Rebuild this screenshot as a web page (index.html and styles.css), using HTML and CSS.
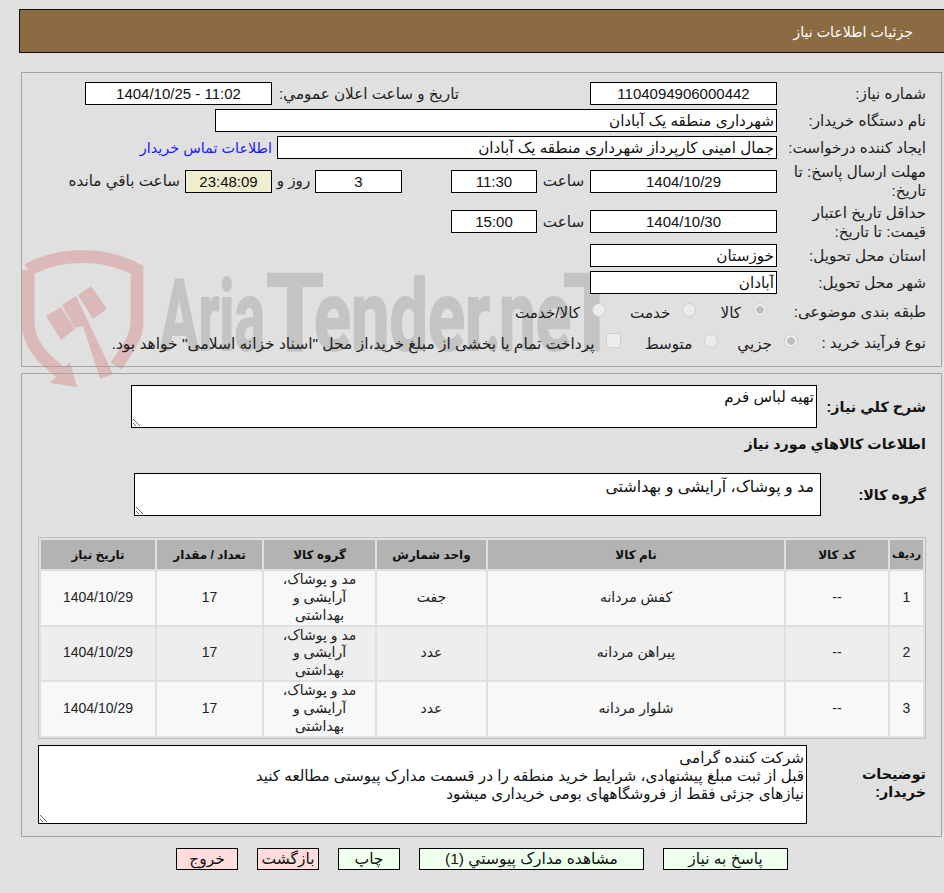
FILE: index.html
```html
<!DOCTYPE html>
<html lang="fa" dir="rtl">
<head>
    <meta charset="UTF-8">
    <title>جزئیات اطلاعات نیاز</title>
    <link rel="stylesheet" href="styles.css">
</head>
<body>
    <!-- Watermark -->
    <svg class="watermark" viewBox="0 240 640 160" width="640" height="160">
        <g class="wm-shield">
            <path class="wm-line" d="M28 270 C60 252 105 252 137 270 L137 322 C137 338 128 348 116 366"/>
            <path class="wm-line" d="M28 270 L28 322 C28 345 45 362 65 375"/>
            <polygon points="70,362 77,387 50,383"/>
            <polygon points="46,316 61,307 75,329 61,340"/>
            <polygon points="62,305 76,296 113,374 100,379 83,326 75,328"/>
            <polygon points="78,295 91,286 107,309 93,319"/>
        </g>
        <g class="wm-text">
            <text x="160" y="350" textLength="105" lengthAdjust="spacingAndGlyphs">Aria</text>
            <text class="wm-cap" x="266" y="350" textLength="58" lengthAdjust="spacingAndGlyphs">T</text>
            <text x="314" y="350" textLength="176" lengthAdjust="spacingAndGlyphs">ender</text>
            <text x="486" y="350" textLength="14" lengthAdjust="spacingAndGlyphs">.</text>
            <text x="499" y="350" textLength="72" lengthAdjust="spacingAndGlyphs">ne</text>
            <text class="wm-cap" x="563" y="350" textLength="58" lengthAdjust="spacingAndGlyphs">T</text>
        </g>
    </svg>

    <div class="page">
        <div class="page-title">جزئیات اطلاعات نیاز</div>

        <!-- Need details -->
        <div class="panel panel-info">
            <div class="row">
                <label class="lbl">شماره نیاز:</label>
                <input class="box w-date" readonly value="1104094906000442">
                <label class="lbl-public">تاریخ و ساعت اعلان عمومي:</label>
                <input class="box w-date" dir="ltr" readonly value="1404/10/25 - 11:02">
            </div>
            <div class="row">
                <label class="lbl">نام دستگاه خریدار:</label>
                <input class="box w-buyer start" readonly value="شهرداری منطقه یک آبادان">
            </div>
            <div class="row">
                <label class="lbl">ایجاد کننده درخواست:</label>
                <input class="box w-creator start" readonly value="جمال امینی کارپرداز شهرداری منطقه یک آبادان">
                <a class="contact" href="#">اطلاعات تماس خریدار</a>
            </div>
            <div class="row row-tall">
                <label class="lbl">مهلت ارسال پاسخ: تا تاریخ:</label>
                <input class="box w-date" readonly value="1404/10/29">
                <span class="unit">ساعت</span>
                <input class="box w-time" readonly value="11:30">
                <input class="box w-time days" readonly value="3">
                <span class="unit-days">روز و</span>
                <input class="box w-time timer" readonly value="23:48:09">
                <span class="remain">ساعت باقي مانده</span>
            </div>
            <div class="row row-tall row-tall2">
                <label class="lbl">حداقل تاریخ اعتبار قیمت: تا تاریخ:</label>
                <input class="box w-date" readonly value="1404/10/30">
                <span class="unit">ساعت</span>
                <input class="box w-time" readonly value="15:00">
            </div>
            <div class="row">
                <label class="lbl">استان محل تحویل:</label>
                <input class="box w-date start" readonly value="خوزستان">
            </div>
            <div class="row">
                <label class="lbl">شهر محل تحویل:</label>
                <input class="box w-date start" readonly value="آبادان">
            </div>
            <div class="row row-choice">
                <label class="lbl">طبقه بندی موضوعی:</label>
                <input class="radio first" type="radio" name="cat" checked disabled>
                <span class="opt">کالا</span>
                <input class="radio" type="radio" name="cat" disabled>
                <span class="opt">خدمت</span>
                <input class="radio" type="radio" name="cat" disabled>
                <span class="opt">کالا/خدمت</span>
            </div>
            <div class="row row-choice">
                <label class="lbl lbl-short">نوع فرآیند خرید :</label>
                <input class="radio" type="radio" name="kind" checked disabled>
                <span class="opt opt-near">جزیي</span>
                <input class="radio" type="radio" name="kind" disabled>
                <span class="opt">متوسط</span>
                <input class="check" type="checkbox" disabled>
                <span class="opt opt-long">پرداخت تمام یا بخشی از مبلغ خرید،از محل "اسناد خزانه اسلامی" خواهد بود.</span>
            </div>
        </div>

        <!-- Goods -->
        <div class="panel panel-goods">
            <div class="desc-row">
                <label class="lbl-bold">شرح کلي نیاز:</label>
                <textarea class="area area-desc" readonly>تهیه لباس فرم</textarea>
            </div>
            <h3 class="goods-title">اطلاعات کالاهاي مورد نیاز</h3>
            <div class="group-row">
                <label class="lbl-bold">گروه کالا:</label>
                <textarea class="area area-group" readonly>مد و پوشاک، آرایشی و بهداشتی</textarea>
            </div>

            <table class="goods">
                <thead>
                    <tr>
                        <th class="c-row">ردیف</th>
                        <th class="c-code">کد کالا</th>
                        <th class="c-name">نام کالا</th>
                        <th class="c-unit">واحد شمارش</th>
                        <th class="c-group">گروه کالا</th>
                        <th class="c-qty">تعداد / مقدار</th>
                        <th class="c-date">تاریخ نیاز</th>
                    </tr>
                </thead>
                <tbody>
                    <tr>
                        <td>1</td><td>--</td><td>کفش مردانه</td><td>جفت</td>
                        <td class="group-cell">مد و پوشاک، آرایشی و بهداشتی</td><td>17</td><td>1404/10/29</td>
                    </tr>
                    <tr>
                        <td>2</td><td>--</td><td>پیراهن مردانه</td><td>عدد</td>
                        <td class="group-cell">مد و پوشاک، آرایشی و بهداشتی</td><td>17</td><td>1404/10/29</td>
                    </tr>
                    <tr>
                        <td>3</td><td>--</td><td>شلوار مردانه</td><td>عدد</td>
                        <td class="group-cell">مد و پوشاک، آرایشی و بهداشتی</td><td>17</td><td>1404/10/29</td>
                    </tr>
                </tbody>
            </table>

            <div class="notes-row">
                <label class="lbl-bold lbl-notes">توضیحات خریدار:</label>
                <textarea class="area area-notes" readonly>شرکت کننده گرامی
قبل از ثبت مبلغ پیشنهادی، شرایط خرید منطقه را در قسمت مدارک پیوستی مطالعه کنید
نیازهای جزئی فقط از فروشگاههای بومی خریداری میشود</textarea>
            </div>
        </div>

        <div class="actions">
            <button class="btn btn-go w-reply">پاسخ به نیاز</button>
            <button class="btn btn-go w-docs">مشاهده مدارک پیوستي (1)</button>
            <button class="btn btn-go w-small">چاپ</button>
            <button class="btn btn-stop w-small">بازگشت</button>
            <button class="btn btn-stop w-small">خروج</button>
        </div>
    </div>
</body>
</html>
```

FILE: styles.css
```css
html, body {
    margin: 0;
    padding: 0;
    background: #e0e0e0;
}
body {
    position: relative;
    height: 893px;
    overflow: hidden;
    font-family: "Liberation Sans", "DejaVu Sans", sans-serif;
    font-size: 15.2px;
    color: #222;
}
.watermark {
    position: absolute;
    left: 0;
    top: 240px;
    direction: ltr;
}
.wm-shield {
    fill: #dcb9b9;
}
.wm-line {
    fill: none;
    stroke: #dcb9b9;
    stroke-width: 13;
}
.wm-text {
    fill: #c4c4c4;
    stroke: #c4c4c4;
    stroke-width: 2;
    font-family: Roboto, sans-serif;
    font-weight: 700;
    font-size: 98px;
}
.wm-cap {
    font-size: 108px;
}
.page {
    position: relative;
    padding-top: 9px;
}
.page-title {
    height: 42px;
    margin-left: 19px;
    padding-right: 31px;
    font-size: 14.2px;
    line-height: 44px;
    color: #fff;
    background: #8b6b42;
    border: 1px solid #111;
    border-right: 0;
}
.panel {
    margin: 0 2px 0 0;
    margin-left: 21px;
    border: 1px solid #a4a4a4;
    padding-right: 15px;
}
.panel-info {
    display: flex;
    flex-direction: column;
    gap: 4px;
    height: 284px;
    margin-top: 19px;
    padding-top: 9px;
}
.panel-goods {
    height: 462px;
    margin-top: 6px;
}
.row {
    display: flex;
    align-items: center;
    height: 23px;
}
.row-tall {
    height: 36px;
}
.row-tall2 {
    height: 37px;
}
.row-choice {
    height: 27px;
}
.lbl {
    width: 149px;
    flex: none;
    padding-left: 6px;
    box-sizing: border-box;
    line-height: 19px;
}
.lbl-short {
    width: 128px;
    padding-left: 0;
}
.lbl-public {
    width: 313px;
    padding-right: 131px;
    box-sizing: border-box;
    flex: none;
    margin-left: 5px;
    white-space: nowrap;
}
.box {
    height: 23px;
    box-sizing: border-box;
    padding: 0 2px;
    border: 1px solid #000;
    border-radius: 0;
    background: #fff;
    color: #111;
    font: inherit;
    font-size: 15px;
    text-align: center;
    outline: none;
}
.start {
    font-size: 15.2px;
    text-align: right;
}
.w-date {
    width: 187px;
}
.w-time {
    width: 86px;
}
.w-buyer {
    width: 562px;
}
.w-creator {
    width: 500px;
}
.unit {
    width: 53px;
    text-align: center;
}
.days {
    width: 87px;
    margin-right: 49px;
}
.unit-days {
    width: 43px;
    text-align: center;
}
.timer {
    width: 87px;
    background: #efefcf;
}
.remain {
    margin-right: 5px;
    white-space: nowrap;
}
.contact {
    margin-right: 5px;
    font-size: 14.4px;
    color: #1a1aff;
    text-decoration: none;
    white-space: nowrap;
}
.radio, .check {
    appearance: none;
    flex: none;
    margin: 0 0 3px;
    background: #ececec;
    border: 1px solid #cfcfcf;
    box-sizing: border-box;
}
.radio {
    width: 14px;
    height: 14px;
    border-radius: 50%;
    margin-left: 12px;
}
.radio.first {
    margin-right: 10px;
}
.radio:checked {
    background: radial-gradient(circle, #bdbdbd 0 3.5px, #ececec 4px);
}
.check {
    width: 15px;
    height: 15px;
    border-radius: 2px;
    margin-left: 11px;
    margin-bottom: 5px;
}
.opt {
    margin-left: 24px;
    padding-top: 3px;
    white-space: nowrap;
}
.opt-near {
    margin-left: 19px;
}
.opt-long {
    font-size: 15.5px;
}
.lbl-bold {
    font-weight: 700;
    font-size: 14.3px;
    color: #111;
}
.desc-row {
    display: flex;
    align-items: center;
    padding-top: 11px;
}
.desc-row .lbl-bold {
    width: 109px;
    flex: none;
}
.area {
    box-sizing: border-box;
    border: 1px solid #000;
    border-radius: 0;
    background: #fff;
    color: #111;
    font: inherit;
    line-height: 18px;
    padding: 3px 2px 0;
    margin: 0;
    outline: none;
}
.area-desc {
    width: 686px;
    height: 43px;
    padding-top: 2px;
}
.goods-title {
    margin: 6px 0 0;
    height: 39px;
    font-size: 14.3px;
    line-height: 20px;
    color: #111;
}
.group-row {
    display: flex;
    align-items: center;
}
.group-row .lbl-bold {
    width: 105px;
    flex: none;
}
.area-group {
    width: 687px;
    height: 43px;
    padding: 4px 6px;
    font-size: 15.9px;
}
.goods {
    width: 888px;
    margin-top: 21px;
    border-collapse: separate;
    border-spacing: 2px;
    border: 1px solid #c0c0c0;
    table-layout: fixed;
    text-align: center;
}
.goods th {
    height: 29px;
    padding: 0;
    background: #b3b3b3;
    font-size: 12px;
    color: #111;
}
.goods .c-row {
    font-size: 11px;
}
.goods td {
    height: 53.5px;
    padding: 0;
    font-size: 14px;
    line-height: 17.6px;
    background: #f8f8f8;
}
.goods tbody tr:nth-child(even) td {
    background: #eee;
}
.goods .group-cell {
    padding: 0 12px;
}
.c-row { width: 33px; }
.c-code { width: 102px; }
.c-name { width: 296px; }
.c-unit { width: 109px; }
.c-group { width: 111px; }
.c-qty { width: 105px; }
.c-date { width: 114px; }
.notes-row {
    display: flex;
    align-items: flex-start;
    margin-top: 6px;
}
.lbl-notes {
    width: 119px;
    flex: none;
    box-sizing: border-box;
    padding-left: 40px;
    margin-top: 20px;
    line-height: 18px;
}
.area-notes {
    width: 769px;
    height: 79px;
}
.actions {
    display: flex;
    gap: 19px;
    margin-top: 11px;
    padding-right: 156px;
}
.btn {
    height: 22px;
    padding: 0;
    border: 1px solid #000;
    border-radius: 0;
    font: inherit;
    font-size: 15.5px;
    color: #111;
}
.btn-go {
    background: #eeffee;
}
.btn-stop {
    background: #ffdddd;
}
.w-reply { width: 125px; }
.w-docs { width: 225px; }
.w-small { width: 62px; }
```
